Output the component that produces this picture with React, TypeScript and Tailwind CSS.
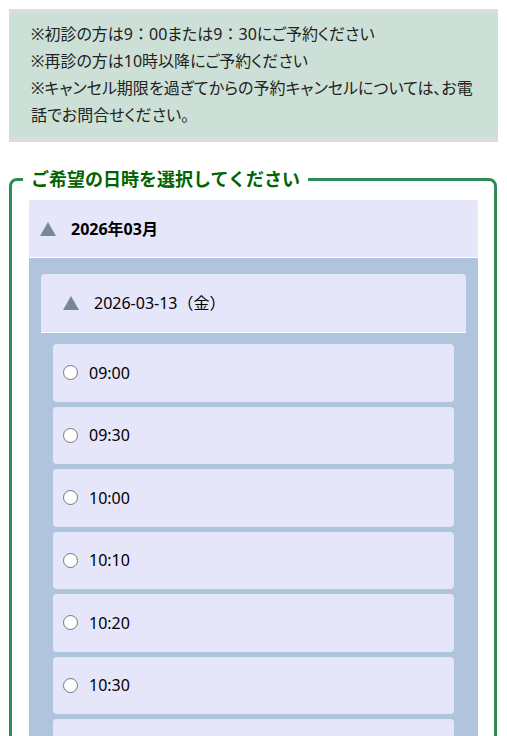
import React from "react";

const slots = ["09:00", "09:30", "10:00", "10:10", "10:20", "10:30", "10:40", "10:50"];

function Tri() {
  return (
    <svg width="16" height="14" viewBox="0 0 16 14" className="shrink-0">
      <polygon points="8,0 16,14 0,14" fill="#778899" />
    </svg>
  );
}

function Colon() {
  return <span className="[font-feature-settings:normal]">：</span>;
}

export default function App() {
  return (
    <div
      className="min-h-[736px] bg-white px-[9px] pt-[9px] text-black"
      style={{ fontFamily: '"Noto Sans", "Noto Sans CJK JP", sans-serif' }}
    >
      <div className="border-y-[5px] border-[#dcdcdc] bg-[#cce0d7] px-[22px] pt-[7px] pb-[8px] text-[16px] leading-[27px] text-[#222] [font-feature-settings:'palt']">
        <p>
          ※初診の方は9<Colon />00または9<Colon />30にご予約ください
        </p>
        <p>※再診の方は10時以降にご予約ください</p>
        <p>※キャンセル期限を過ぎてからの予約キャンセルについては、お電話でお問合せください。</p>
      </div>

      <fieldset className="mt-[24px] mr-[1px] rounded-[8px] border-[3px] border-[#2e8b57] pl-[17px] pr-[16px] pt-[7px] pb-[20px]">
        <legend className="ml-[-6px] px-[8px] text-[18px] font-bold leading-[27px] text-[#006400]">
          ご希望の日時を選択してください
        </legend>

        <div className="rounded-t-[4px] bg-[#b0c4de]">
          <div className="flex h-[58px] items-center rounded-t-[4px] border-b border-white bg-[#e6e6fa] pl-[11px]">
            <Tri />
            <span className="ml-[15px] text-[16px] font-bold">2026年03月</span>
          </div>
          <div className="px-[12px] pt-[16px]">
            <div className="rounded-t-[4px] bg-[#b0c4de]">
              <div className="flex h-[59px] items-center rounded-t-[4px] border-b border-white bg-[#e6e6fa] pl-[22px]">
                <Tri />
                <span className="ml-[15px] text-[16px]">2026-03-13（金）</span>
              </div>
              <div className="flex flex-col gap-[5px] px-[12px] pt-[11px]">
                {slots.map((s) => (
                  <label
                    key={s}
                    className="flex h-[57.5px] items-center rounded-[4px] bg-[#e6e6fa] pl-[10px]"
                  >
                    <span className="h-[15px] w-[15px] shrink-0 rounded-full border border-[#767676] bg-white" />
                    <span className="ml-[11px] text-[16px]">{s}</span>
                  </label>
                ))}
              </div>
            </div>
          </div>
        </div>
      </fieldset>
    </div>
  );
}
